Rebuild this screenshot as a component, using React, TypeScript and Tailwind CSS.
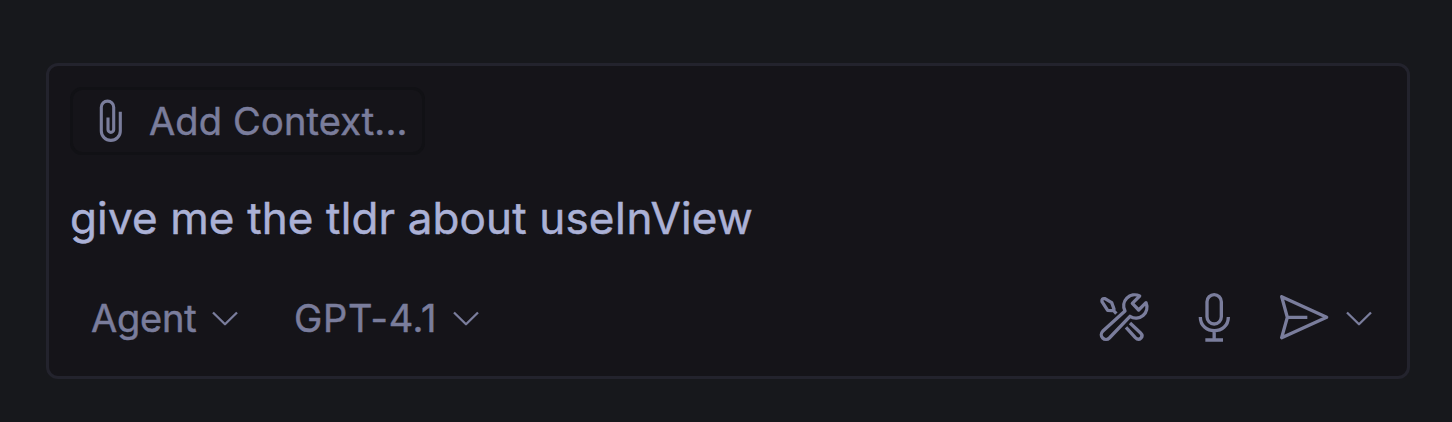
import React from "react";

const stroke = {
  fill: "none",
  stroke: "currentColor",
  strokeLinecap: "butt" as const,
  strokeLinejoin: "round" as const,
};

function PaperclipIcon() {
  return (
    <svg className="h-12 w-11 shrink-0" viewBox="88 97.300 44 48" {...stroke} strokeWidth={3.1}>
      <path d="M108 117.700V129.800a2.850 2.850 0 0 0 5.700 0V107.600a6.200 6.200 0 0 0-12.400 0V131.200a9.500 9.500 0 0 0 19 0V112" />
    </svg>
  );
}

function ChevronIcon() {
  return (
    <svg className="h-7 w-7 shrink-0" viewBox="0 0 28 28" {...stroke} strokeWidth={2.3}>
      <path d="M2 8.500 14 20.300 26 8.500" />
    </svg>
  );
}

function ToolsIcon() {
  return (
    <svg className="h-[65px] w-[70px] shrink-0" viewBox="0 0 210 195" {...stroke} strokeWidth={10}>
      <path d="M149 33 127 55 146 75 168 53A33 33 0 0 1 120 94L58 159A14 14 0 0 1 38 139L105 78A33 33 0 0 1 149 33Z" />
      <path d="M36 50Q34 39 45 41L65 53 72 72 67 77 53 76Z" />
      <path d="M69 75 79 86" />
      <path d="M108 127 136 158Q145 167 153 159 160 152 151 143L120 114" />
    </svg>
  );
}

function MicIcon() {
  return (
    <svg className="h-[65px] w-[70px] shrink-0" viewBox="0 0 210 195" {...stroke} strokeWidth={10}>
      <rect x="81" y="29" width="43" height="88" rx="21.5" />
      <path d="M61 96C61 151 145 151 145 96M102.500 137V164M76 165H129" />
    </svg>
  );
}

function SendIcon() {
  return (
    <svg className="h-[65px] w-[60px] shrink-0" viewBox="0 0 180 195" {...stroke} strokeWidth={10}>
      <path d="M35 35 170 97 35 158 52 97ZM52 97H112" />
    </svg>
  );
}

export default function App() {
  return (
    <main className="h-[422px] w-[1452px] overflow-hidden bg-[#17181c] pl-[46px] pt-[63px] font-['Inter',sans-serif] text-[#7a7d9c] [-webkit-text-stroke:0.5px_currentColor]">
      <section className="flex h-[316px] w-[1364px] flex-col rounded-xl border-[3px] border-[#23232d] bg-[#151419] pl-[21px] pt-[21px]">
        <button className="flex h-[68px] w-[355px] shrink-0 items-center rounded-xl border-[3px] border-[#111115] pl-[15px]">
          <PaperclipIcon />
          <span className="ml-[17px] whitespace-nowrap text-[38px] leading-[48px] tracking-[0.15px]">Add Context...</span>
        </button>
        <p className="mt-[35px] h-[56px] shrink-0 whitespace-nowrap text-[44px] leading-[56px] tracking-[0.13px] text-[#abb1d6]">
          give me the tldr about useInView
        </p>
        <div className="mt-[39px] flex h-[65px] items-center">
          <button className="ml-[21px] flex w-[203px] items-center">
            <span className="w-[120px] text-left text-[38px] leading-[48px] tracking-[-0.2px]">Agent</span>
            <ChevronIcon />
          </button>
          <button className="flex w-[796px] items-center">
            <span className="w-[158px] whitespace-nowrap text-left text-[38px] leading-[48px] tracking-[0.7px]">GPT-4.1</span>
            <ChevronIcon />
          </button>
          <button className="mr-5" aria-label="Tools"><ToolsIcon /></button>
          <button className="mr-5" aria-label="Microphone"><MicIcon /></button>
          <button className="mr-[15px]" aria-label="Send"><SendIcon /></button>
          <button aria-label="Send options"><ChevronIcon /></button>
        </div>
      </section>
    </main>
  );
}
